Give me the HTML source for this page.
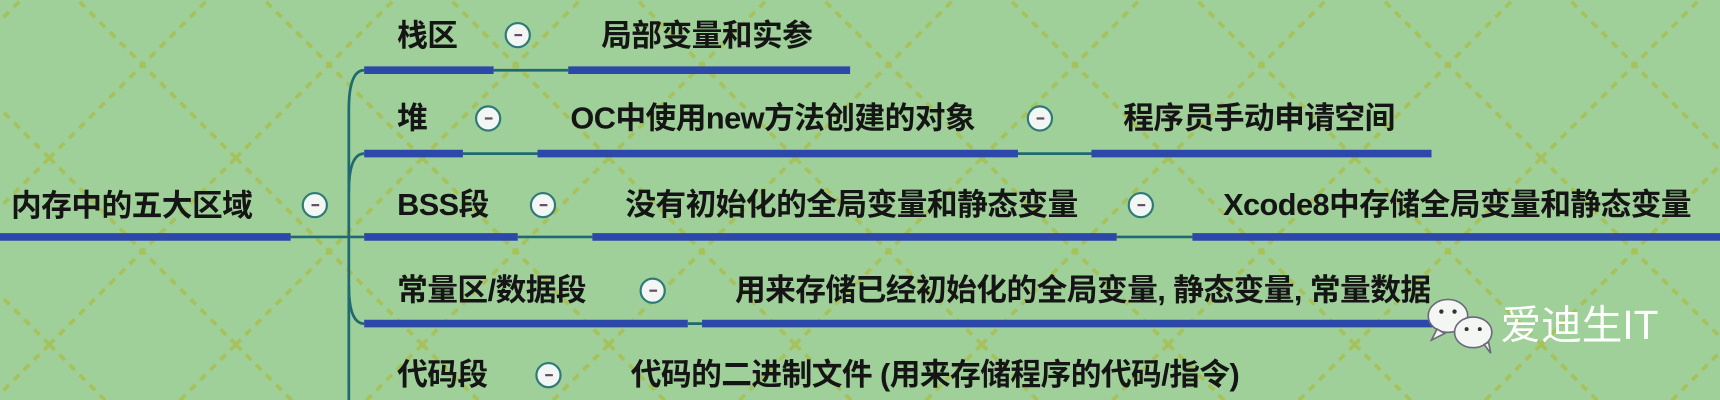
<!DOCTYPE html>
<html><head><meta charset="utf-8"><style>
html,body{margin:0;padding:0;width:1720px;height:400px;overflow:hidden;background:#a0d09a;}
#w{position:absolute;left:0;top:0;width:1568px;height:365px;transform:scale(1.09694);transform-origin:0 0;}
.t{position:absolute;font-family:"Liberation Sans","Noto Sans CJK SC",sans-serif;font-weight:bold;font-size:28px;color:#151515;line-height:32px;white-space:nowrap;letter-spacing:-0.5px;}
.c{position:absolute;width:24px;height:24px;border-radius:50%;background:#f2f7f3;border:2.5px solid #2f7a78;box-sizing:border-box;}
.c:after{content:"";position:absolute;left:6.5px;top:9px;width:7px;height:2px;background:#6a4a6a;}
</style></head><body><div id="w">
<svg width="1568" height="365" style="position:absolute;left:0;top:0">
<defs><pattern id="p" width="170" height="170" patternUnits="userSpaceOnUse" x="45" y="-26">
<path d="M0 0 L170 170 M170 0 L0 170" stroke="#a6c25c" stroke-width="3.5" stroke-dasharray="7 6" fill="none"/>
</pattern></defs>
<rect width="1568" height="365" fill="#a0d09a"/>
<rect width="1568" height="365" fill="url(#p)"/>
<g stroke="#1e6a70" stroke-width="2.5" fill="none">
<path d="M265 216 L332 216"/>
<path d="M332 64 Q318 64 318 100 L318 365"/>
<path d="M332 140 Q318 140 318 175"/>
<path d="M332 295 Q318 295 318 260"/>
<path d="M450 64 L518 64 M422 140 L490 140 M928 140 L995 140 M472 216 L540 216 M1018 216 L1087 216 M627 295 L640 295"/>
</g>
<g stroke="#2c48a8" stroke-width="7">
<path d="M0 216 L265 216"/>
<path d="M332 64 L450 64 M518 64 L775 64"/>
<path d="M332 140 L422 140 M490 140 L928 140 M995 140 L1305 140"/>
<path d="M332 216 L472 216 M540 216 L1018 216 M1087 216 L1568 216"/>
<path d="M332 295 L627 295 M640 295 L1315 295"/>
</g>
<g fill="#f4f6f4" stroke="#6a6a7a" stroke-width="1.5">
<ellipse cx="1320" cy="288" rx="18" ry="15"/>
<path d="M1310 300 l-5 10 l12 -6z"/>
<ellipse cx="1343" cy="303" rx="17" ry="14"/>
<path d="M1353 314 l6 8 l-2 -10z"/>
</g>
<g fill="#333"><circle cx="1314" cy="284" r="2"/><circle cx="1326" cy="284" r="2"/><circle cx="1337" cy="300" r="1.8"/><circle cx="1349" cy="300" r="1.8"/></g>
</svg>
<div class="t" style="left:10px;top:172px">内存中的五大区域</div><div class="c" style="left:275px;top:175px"></div>
<div class="t" style="left:362px;top:17px">栈区</div><div class="c" style="left:460px;top:20px"></div>
<div class="t" style="left:548px;top:17px">局部变量和实参</div>
<div class="t" style="left:362px;top:92px">堆</div><div class="c" style="left:433px;top:96px"></div>
<div class="t" style="left:520px;top:92px">OC中使用new方法创建的对象</div><div class="c" style="left:936px;top:96px"></div>
<div class="t" style="left:1024px;top:92px">程序员手动申请空间</div>
<div class="t" style="left:362px;top:171px">BSS段</div><div class="c" style="left:483px;top:175px"></div>
<div class="t" style="left:570px;top:171px">没有初始化的全局变量和静态变量</div><div class="c" style="left:1028px;top:175px"></div>
<div class="t" style="left:1115px;top:171px">Xcode8中存储全局变量和静态变量</div>
<div class="t" style="left:362px;top:249px">常量区/数据段</div><div class="c" style="left:583px;top:253px"></div>
<div class="t" style="left:670px;top:249px">用来存储已经初始化的全局变量, 静态变量, 常量数据</div>
<div class="t" style="left:362px;top:326px">代码段</div><div class="c" style="left:488px;top:330px"></div>
<div class="t" style="left:575px;top:326px">代码的二进制文件 (用来存储程序的代码/指令)</div>
<div class="t" style="left:1368px;top:277px;font-weight:normal;font-size:37px;color:#fff;line-height:40px;letter-spacing:0">爱迪生IT</div>
</div></body></html>
